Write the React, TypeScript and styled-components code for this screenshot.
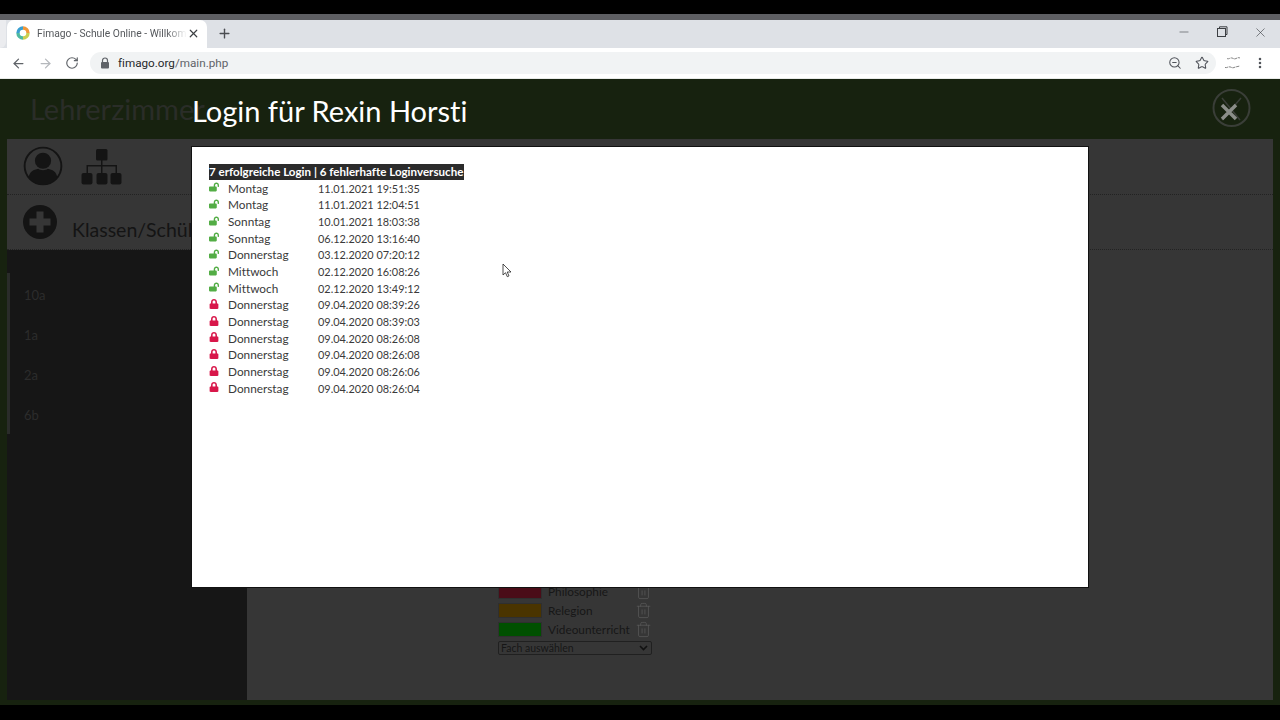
import React from "react";
import styled, { createGlobalStyle } from "styled-components";
import {
  ArrowLeft,
  ArrowRight,
  Minus,
  MoreVertical,
  Plus,
  RotateCw,
  Star,
  Trash2,
  X,
  ZoomOut,
} from "lucide-react";
import { FaLock, FaLockOpen } from "react-icons/fa";

const GlobalStyle = createGlobalStyle`
  html, body {
    margin: 0;
    padding: 0;
    background: #000;
    overflow: hidden;
  }
  * {
    box-sizing: border-box;
    font-variant-ligatures: none;
  }
  svg {
    flex-shrink: 0;
  }
`;

const APP_FONT = `Lato, "Noto Sans", sans-serif`;
const CHROME_FONT = `Roboto, "Noto Sans", sans-serif`;

const Screen = styled.div`
  position: relative;
  width: 1280px;
  height: 720px;
  padding-top: 14px;
  background: #000;
  overflow: hidden;
  font-family: ${APP_FONT};
`;

const TitleStrip = styled.div`
  height: 6px;
  background: #5e5f63;
`;

const TabBar = styled.div`
  display: flex;
  align-items: stretch;
  height: 28px;
  background: #dee1e6;
`;

const PrevTab = styled.div`
  width: 6px;
  margin-right: 1px;
  background: #ebecef;
  border-bottom-right-radius: 6px;
`;

const ActiveTab = styled.div`
  display: flex;
  align-items: center;
  width: 200px;
  padding: 0 7px 2px 9px;
  background: #fff;
  border-radius: 7px 7px 0 0;
`;

const TabTitle = styled.span`
  flex: 1;
  min-width: 0;
  margin-left: 7px;
  white-space: nowrap;
  font: 10.3px ${CHROME_FONT};
  color: #55585c;
  -webkit-mask-image: linear-gradient(90deg, #000 86%, transparent 100%);
  mask-image: linear-gradient(90deg, #000 86%, transparent 100%);
`;

const NewTab = styled.div`
  display: flex;
  align-items: center;
  margin-left: 10px;
  padding-bottom: 2px;
  color: #4a4d51;
`;

const WindowControls = styled.div`
  display: flex;
  align-items: center;
  gap: 25px;
  height: 24px;
  margin-left: auto;
  padding-right: 12px;
  color: #3c3f43;
`;

const Toolbar = styled.div`
  display: flex;
  align-items: center;
  height: 31px;
  padding-left: 11px;
  background: #fff;
  color: #5f6368;
  border-bottom: 1px solid #e8eae8;
`;

const NavIcons = styled.div`
  display: flex;
  align-items: center;
  gap: 12px;
`;

const Omnibox = styled.div`
  display: flex;
  align-items: center;
  width: 1126px;
  height: 22px;
  margin-left: 11px;
  padding: 0 7px 0 10px;
  background: #f1f3f4;
  border-radius: 11px;
`;

const UrlText = styled.span`
  margin-left: 8px;
  font: 11.7px ${CHROME_FONT};
  color: #5f6368;

  b {
    font-weight: 400;
    color: #26282b;
  }
`;

const OmniActions = styled.div`
  display: flex;
  align-items: center;
  gap: 13px;
  margin-left: auto;
  color: #50535a;
`;

const ToolbarEnd = styled.div`
  display: flex;
  align-items: center;
  gap: 9px;
  margin-left: 8px;
  color: #50535a;
`;

const PageArea = styled.div`
  height: 626px;
  padding: 0 7px 5px;
  background: #17220f;
  display: flex;
  flex-direction: column;
`;

const SchoolTitle = styled.div`
  height: 60px;
  padding: 12px 0 0 23px;
  font-size: 29px;
  color: #2a2d28;
`;

const Panel = styled.div`
  flex: 1;
  display: flex;
  flex-direction: column;
  background: #363636;
`;

const IconRow = styled.div`
  display: flex;
  align-items: flex-start;
  gap: 18px;
  height: 56px;
  padding: 7px 0 0 16px;
  border-bottom: 1px dotted #222;
`;

const TreeWrap = styled.div`
  margin-top: 2px;
`;

const AddRow = styled.div`
  display: flex;
  align-items: flex-start;
  height: 55px;
  padding: 10px 0 0 16px;
  border-bottom: 1px dotted #222;
`;

const AddLabel = styled.span`
  margin: 13px 0 0 15px;
  font-size: 19.5px;
  color: #141414;
`;

const PanelBody = styled.div`
  flex: 1;
  display: flex;
`;

const Sidebar = styled.div`
  width: 240px;
  padding-top: 23px;
  background: #161616;
`;

const ClassList = styled.ul`
  height: 161px;
  margin: 0;
  padding: 2px 0 0 14px;
  list-style: none;
  border-left: 3px solid #2a2c2a;
`;

const ClassItem = styled.li`
  height: 40px;
  padding-top: 12px;
  font-size: 13px;
  line-height: 16px;
  color: #2c2c2c;
`;

const Content = styled.div`
  flex: 1;
  padding: 332px 0 0 251px;
`;

const SubjectRow = styled.div`
  display: flex;
  align-items: center;
  height: 19px;
`;

const Swatch = styled.div<{ $color: string }>`
  width: 44px;
  height: 15px;
  background: ${(props) => props.$color};
  border: 1px solid #2f2f2f;
`;

const SubjectName = styled.span`
  width: 85px;
  margin-left: 6px;
  font-size: 11.8px;
  white-space: nowrap;
  color: #171717;
`;

const TrashIcon = styled(Trash2)`
  margin-left: 2px;
  color: #5a5a5a;
`;

const SubjectSelect = styled.div`
  display: flex;
  align-items: center;
  justify-content: space-between;
  width: 154px;
  height: 14px;
  margin-top: 2px;
  padding: 0 3px 0 2px;
  font-size: 10.5px;
  color: #161616;
  border: 1px solid #202020;
  border-radius: 2px;
`;

const ModalTitle = styled.h1`
  position: absolute;
  left: 192px;
  top: 92px;
  margin: 0;
  font-size: 29px;
  font-weight: 400;
  line-height: 38px;
  color: #fff;
`;

const CloseButton = styled.svg`
  position: absolute;
  left: 1212px;
  top: 89px;
`;

const Modal = styled.div`
  position: absolute;
  left: 192px;
  top: 147px;
  width: 896px;
  height: 440px;
  padding: 17px 17px;
  background: #fff;
  box-shadow: 0 0 0 1px #111;
`;

const LogHeader = styled.div`
  width: fit-content;
  height: 16px;
  padding: 0 1px 0 0;
  background: #2b2b2b;
  font-size: 11.6px;
  font-weight: 700;
  line-height: 16px;
  white-space: nowrap;
  color: #fff;
`;

const LogRow = styled.div`
  display: flex;
  align-items: center;
  height: 16.67px;
  font-size: 11.8px;
  color: #3a3a3a;
`;

const LogIcon = styled.span<{ $ok: boolean }>`
  display: flex;
  width: 19px;
  margin-top: -2px;
  font-size: 10px;
  color: ${(props) => (props.$ok ? "#53ad45" : "#d8174a")};
`;

const LogDay = styled.span`
  width: 90px;
`;

const LogDate = styled.span`
  font-size: 10.9px;
  white-space: nowrap;
`;

const Cursor = styled.svg`
  position: absolute;
  left: 502px;
  top: 263px;
`;

const classes = ["10a", "1a", "2a", "6b"];

const subjects = [
  { name: "Philosophie", color: "#4a0c18" },
  { name: "Relegion", color: "#4a3400" },
  { name: "Videounterricht", color: "#005000" },
];

const logins = [
  { ok: true, day: "Montag", date: "11.01.2021 19:51:35" },
  { ok: true, day: "Montag", date: "11.01.2021 12:04:51" },
  { ok: true, day: "Sonntag", date: "10.01.2021 18:03:38" },
  { ok: true, day: "Sonntag", date: "06.12.2020 13:16:40" },
  { ok: true, day: "Donnerstag", date: "03.12.2020 07:20:12" },
  { ok: true, day: "Mittwoch", date: "02.12.2020 16:08:26" },
  { ok: true, day: "Mittwoch", date: "02.12.2020 13:49:12" },
  { ok: false, day: "Donnerstag", date: "09.04.2020 08:39:26" },
  { ok: false, day: "Donnerstag", date: "09.04.2020 08:39:03" },
  { ok: false, day: "Donnerstag", date: "09.04.2020 08:26:08" },
  { ok: false, day: "Donnerstag", date: "09.04.2020 08:26:08" },
  { ok: false, day: "Donnerstag", date: "09.04.2020 08:26:06" },
  { ok: false, day: "Donnerstag", date: "09.04.2020 08:26:04" },
];

function Favicon() {
  const arcs = ["#f0973a", "#c9cf52", "#4fb9a0", "#3a9fd0"];
  return (
    <svg width="14" height="14" viewBox="0 0 14 14" fill="none">
      {arcs.map((color, i) => (
        <circle
          key={color}
          cx="7"
          cy="7"
          r="5"
          stroke={color}
          strokeWidth="3.4"
          pathLength="4"
          strokeDasharray="1 3"
          transform={`rotate(${i * 90 - 90} 7 7)`}
        />
      ))}
    </svg>
  );
}

function FilledLock() {
  return (
    <svg width="10" height="12" viewBox="0 0 10 12">
      <path d="M2.5 5V3.5a2.5 2.5 0 0 1 5 0V5" fill="none" stroke="#5f6368" strokeWidth="1.2" />
      <rect x="1" y="5" width="8" height="6.5" rx="1" fill="#5f6368" />
    </svg>
  );
}

function RestoreIcon() {
  return (
    <svg width="12" height="12" viewBox="0 0 12 12" fill="none" stroke="#3c3f43" strokeWidth="1">
      <rect x="1.5" y="2.5" width="8" height="8" />
      <path d="M3.5 2.5V0.8H11V8.5H9.5" />
    </svg>
  );
}

function ExtensionIcon() {
  return (
    <svg width="20" height="16" viewBox="0 0 20 16" fill="none" stroke="#777" strokeWidth="0.9">
      <path d="M3 3.5c2 1 3-1 5-.5s2 1.5 4 .5 3-1 4-.5" strokeDasharray="3 0.8" />
      <path d="M1 12.5c2 .6 3-1 5-.6s2 1.4 4 .6 4-1 6-1.500" strokeDasharray="3 0.8" />
    </svg>
  );
}

function UserIcon() {
  return (
    <svg width="40" height="40" viewBox="0 0 42 42">
      <circle cx="21" cy="21" r="19.3" fill="none" stroke="#141414" strokeWidth="2" />
      <circle cx="21" cy="15.500" r="8.500" fill="#141414" />
      <path d="M6 33c1-6 5-8 10-9 3 2 7 2 10 0 5 1 9 3 10 9-4 5-9 7.500-15 7.500S10 38 6 33Z" fill="#141414" />
    </svg>
  );
}

function TreeIcon() {
  return (
    <svg width="42" height="38" viewBox="0 0 42 38" fill="#141414">
      <rect x="15" y="1" width="11.500" height="11.500" rx="1.500" />
      <path d="M20 12h1.500v5H36v8h-1.500v-6.500h-13V25H20v-6.500H7V25H5.500v-8H20Z" />
      <rect x="0.500" y="25" width="11" height="11.500" rx="2" />
      <rect x="15.500" y="25" width="11" height="11.500" rx="2" />
      <rect x="29.500" y="25" width="11" height="11.500" rx="2" />
    </svg>
  );
}

function AddIcon() {
  return (
    <svg width="34" height="34" viewBox="0 0 34 34">
      <circle cx="17" cy="17" r="17" fill="#141414" />
      <path d="M13.500 6.500h7v7h7v7h-7v7h-7v-7h-7v-7h7Z" fill="#363636" />
    </svg>
  );
}

export default function App() {
  return (
    <Screen>
      <GlobalStyle />
      <TitleStrip />
      <TabBar>
        <PrevTab />
        <ActiveTab>
          <Favicon />
          <TabTitle>Fimago - Schule Online - Willkom</TabTitle>
          <X size={13} color="#3c3f43" strokeWidth={2.2} />
        </ActiveTab>
        <NewTab>
          <Plus size={15} strokeWidth={2.2} />
        </NewTab>
        <WindowControls>
          <Minus size={14} strokeWidth={1} />
          <RestoreIcon />
          <X size={15} strokeWidth={1} />
        </WindowControls>
      </TabBar>
      <Toolbar>
        <NavIcons>
          <ArrowLeft size={15} strokeWidth={2} />
          <ArrowRight size={15} strokeWidth={2} color="#b5b8bc" />
          <RotateCw size={14} strokeWidth={2} />
        </NavIcons>
        <Omnibox>
          <FilledLock />
          <UrlText>
            <b>fimago.org</b>/main.php
          </UrlText>
          <OmniActions>
            <ZoomOut size={14} strokeWidth={1.8} />
            <Star size={14} strokeWidth={1.8} />
          </OmniActions>
        </Omnibox>
        <ToolbarEnd>
          <ExtensionIcon />
          <MoreVertical size={14} strokeWidth={2.4} />
        </ToolbarEnd>
      </Toolbar>
      <PageArea>
        <SchoolTitle>Lehrerzimmer</SchoolTitle>
        <Panel>
          <IconRow>
            <UserIcon />
            <TreeWrap>
              <TreeIcon />
            </TreeWrap>
          </IconRow>
          <AddRow>
            <AddIcon />
            <AddLabel>Klassen/Schüler</AddLabel>
          </AddRow>
          <PanelBody>
            <Sidebar>
              <ClassList>
                {classes.map((name) => (
                  <ClassItem key={name}>{name}</ClassItem>
                ))}
              </ClassList>
            </Sidebar>
            <Content>
              {subjects.map((subject) => (
                <SubjectRow key={subject.name}>
                  <Swatch $color={subject.color} />
                  <SubjectName>{subject.name}</SubjectName>
                  <TrashIcon size={17} strokeWidth={1} />
                </SubjectRow>
              ))}
              <SubjectSelect>
                Fach auswählen
                <svg width="9" height="6" viewBox="0 0 9 6" fill="none" stroke="#111" strokeWidth="1.6">
                  <path d="M1 1l3.500 3.500L8 1" />
                </svg>
              </SubjectSelect>
            </Content>
          </PanelBody>
        </Panel>
      </PageArea>

      <ModalTitle>Login für Rexin Horsti</ModalTitle>
      <CloseButton width="40" height="42" viewBox="0 0 40 42" fill="none">
        <circle cx="19.500" cy="19" r="18" stroke="#3a3e38" strokeWidth="2" />
        <path d="M10 9l18 22M29 9L10 31" stroke="#3a3e38" strokeWidth="1.500" />
        <path d="M10 16l14 14M24 16L10 30" stroke="#8b8e89" strokeWidth="3.500" />
      </CloseButton>
      <Modal>
        <LogHeader>7 erfolgreiche Login | 6 fehlerhafte Loginversuche</LogHeader>
        {logins.map((entry, i) => (
          <LogRow key={i}>
            <LogIcon $ok={entry.ok}>{entry.ok ? <FaLockOpen /> : <FaLock />}</LogIcon>
            <LogDay>{entry.day}</LogDay>
            <LogDate>{entry.date}</LogDate>
          </LogRow>
        ))}
      </Modal>
      <Cursor width="10" height="15" viewBox="0 0 10 15">
        <path d="M1 1v11l2.500-2.300 1.800 4 1.700-.8-1.800-3.900H9Z" fill="#fff" stroke="#222" strokeWidth="0.8" />
      </Cursor>
    </Screen>
  );
}
